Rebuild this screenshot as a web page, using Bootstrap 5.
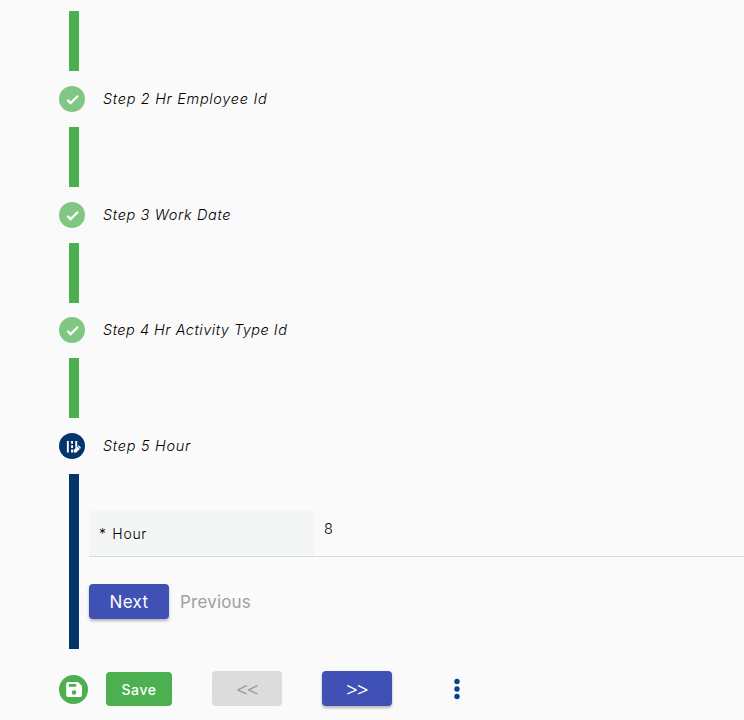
<!DOCTYPE html>
<html lang="en">
<head>
<meta charset="utf-8">
<meta name="viewport" content="width=device-width, initial-scale=1">
<title>Hour entry</title>
<link href="https://cdn.jsdelivr.net/npm/bootstrap@5.3.0/dist/css/bootstrap.min.css" rel="stylesheet">
<style>
body{background:#fafafa;color:#000;font-family:Inter,"Liberation Sans",sans-serif;font-size:14px;height:720px;overflow:hidden}
.stepper{padding:11px 0 0 59px}
.step-head{height:55.8px;gap:18px}
.step-dot{width:26px;height:26px;background:#81c784}
.step-dot.current{background:#03356b}
.step-title{font-style:italic;font-weight:300;font-size:14.5px;line-height:20px;white-space:nowrap}
.t2{letter-spacing:.68px}.t3{letter-spacing:.64px}.t4{letter-spacing:.5px}.t5{letter-spacing:.7px}
.step-line{border-left:10px solid #4caf50;margin-left:10px;height:60px}
.step-line.current{border-color:#03356b;height:175px;padding:37px 0 0 10px}
.field-row{height:46px;border-bottom:1px solid #d3dbdd;margin-bottom:27px;font-weight:300}
.field-label{width:225px;background:#f4f6f6;padding-left:10px;line-height:46px;letter-spacing:.7px;word-spacing:1px}
.field-value{padding:8px 0 0 10px;line-height:20px;font-size:14.5px}
.btn-flat{font-size:17px;line-height:36px;height:35px;padding:0;border:0;border-radius:4px}
.btn-indigo,.btn-indigo:hover{background:#3f51b5;color:#fff;box-shadow:0 2px 3px rgba(0,0,0,.28)}
.btn-next{width:80px;letter-spacing:.4px}
.btn-prev,.btn-prev:disabled{color:#a0a0a0;margin-left:11px;opacity:1;letter-spacing:.2px}
.btn-save,.btn-save:hover{width:66px;height:34px;line-height:35px;margin-left:18px;background:#4caf50;color:#fff;font-size:14px;font-weight:500;letter-spacing:.6px}
.btn-arrow{width:70px;margin:0 0 1px 40px;letter-spacing:-.8px;font-family:"Open Sans",sans-serif;font-size:20px;line-height:37px}
.btn-arrow.btn-indigo{font-weight:500}
.btn-arrow:disabled{background:#dcdcdc;color:#999;opacity:1}
.toolbar-row{height:80px;padding-left:59px}
.save-dot{width:29px;height:29px;background:#4caf50}
.more{margin-left:55px}
</style>
<script src="https://cdn.jsdelivr.net/npm/bootstrap@5.3.0/dist/js/bootstrap.bundle.min.js"></script>
</head>
<body>
<svg class="d-none"><symbol id="check" viewBox="0 0 26 26"><path d="M8.300 13.900l3.300 3.200 7.400-7.300" fill="none" stroke="#fff" stroke-width="2.200"/></symbol></svg>
<main class="stepper">
  <div class="step-line"></div>
  <div class="step-head d-flex align-items-center"><span class="step-dot rounded-circle d-flex"><svg width="26" height="26"><use href="#check"/></svg></span><span class="step-title t2">Step 2 Hr Employee Id</span></div>
  <div class="step-line"></div>
  <div class="step-head d-flex align-items-center"><span class="step-dot rounded-circle d-flex"><svg width="26" height="26"><use href="#check"/></svg></span><span class="step-title t3">Step 3 Work Date</span></div>
  <div class="step-line"></div>
  <div class="step-head d-flex align-items-center"><span class="step-dot rounded-circle d-flex"><svg width="26" height="26"><use href="#check"/></svg></span><span class="step-title t4">Step 4 Hr Activity Type Id</span></div>
  <div class="step-line"></div>
  <div class="step-head d-flex align-items-center"><span class="step-dot current rounded-circle d-flex"><svg width="26" height="26" viewBox="0 0 26 26" fill="#fff"><path d="M7.900 8h1.900v11.500H7.900zM12.100 8H14v2.800h-1.900zM12.100 12.200H14v2.800h-1.900zM12.100 16.400H14v3.100h-1.900zM16.300 8h1.900v5.200l-1.900 1.900zM14.700 17l3.500-3.500 2.600 2.600-3.500 3.500h-2.600zM18.600 13.100l.6-.5q.5-.3.900.1l1.500 1.500q.4.400.1.900l-.6.600z"/></svg></span><span class="step-title t5">Step 5 Hour</span></div>
  <div class="step-line current">
    <div class="field-row d-flex">
      <label class="field-label" for="hour">* Hour</label>
      <div class="field-value" id="hour">8</div>
    </div>
    <div class="d-flex">
      <button class="btn btn-flat btn-indigo btn-next">Next</button>
      <button class="btn btn-flat btn-prev border-0" disabled>Previous</button>
    </div>
  </div>
</main>
<footer class="toolbar-row d-flex align-items-center">
  <span class="save-dot rounded-circle d-flex"><svg width="29" height="29" viewBox="0 0 29 29"><path fill="#fff" fill-rule="evenodd" d="M9 7h10L23 11v9.200a1.800 1.800 0 0 1-1.800 1.800H9a1.800 1.800 0 0 1-1.800-1.800V8.800A1.800 1.800 0 0 1 9 7zM9.800 9v2.700h7.400V9zM15 15.200a2.300 2.300 0 1 0 .01 0z"/></svg></span>
  <button class="btn btn-flat btn-save">Save</button>
  <button class="btn btn-flat btn-arrow" disabled>&lt;&lt;</button>
  <button class="btn btn-flat btn-indigo btn-arrow">&gt;&gt;</button>
  <svg class="more" width="20" height="24" viewBox="0 0 20 24" fill="#034687"><circle cx="10" cy="4.500" r="2.700"/><circle cx="10" cy="12" r="2.700"/><circle cx="10" cy="19.500" r="2.700"/></svg>
</footer>
</body>
</html>
